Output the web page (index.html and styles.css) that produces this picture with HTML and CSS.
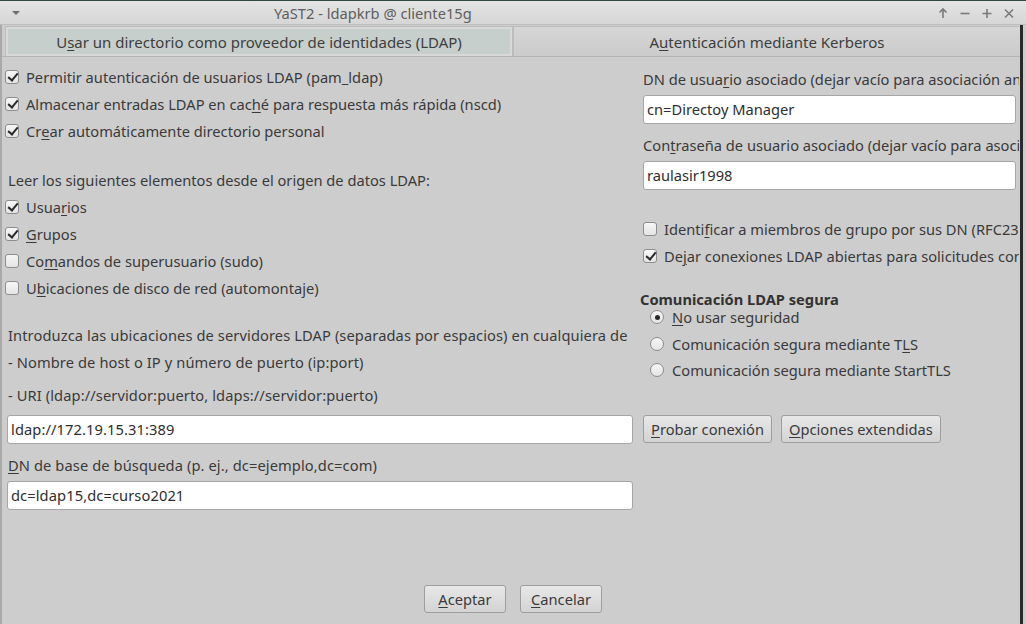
FILE: index.html
```html
<!DOCTYPE html>
<html>
<head>
<meta charset="utf-8">
<link rel="stylesheet" href="styles.css">
</head>
<body>
<div class="window">
  <div class="titlebar">
    <svg class="menu-arrow" width="10" height="6" viewBox="0 0 10 6"><path d="M1 1h8L5 5z" fill="#6e6e6e"/></svg>
    <div class="title">YaST2 - ldapkrb @ cliente15g</div>
    <div class="wbuttons">
      <svg width="12" height="12" viewBox="0 0 12 12"><path d="M6 11V2M2.5 5.5L6 2l3.5 3.5" stroke="#7a7a7a" stroke-width="1.6" fill="none"/></svg>
      <svg width="12" height="12" viewBox="0 0 12 12"><path d="M1.5 6.5h9" stroke="#7a7a7a" stroke-width="1.6"/></svg>
      <svg width="12" height="12" viewBox="0 0 12 12"><path d="M1.5 6.5h9M6 2v9" stroke="#7a7a7a" stroke-width="1.6"/></svg>
      <svg width="12" height="12" viewBox="0 0 12 12"><path d="M2 2.5l8 8M10 2.5l-8 8" stroke="#7a7a7a" stroke-width="1.6"/></svg>
    </div>
  </div>
  <div class="body">
    <div class="tabs">
      <div class="tab active">U<u>s</u>ar un directorio como proveedor de identidades (LDAP)</div>
      <div class="tab">A<u>u</u>tenticación mediante Kerberos</div>
    </div>
    <div class="content">
      <div class="col left">
        <div class="row"><span class="cb on"></span>Permitir autenticación de usuarios LDAP (pam_ldap)</div>
        <div class="row"><span class="cb on"></span>Almacenar entradas LDAP en cac<u>h</u>é para respuesta más rápida (nscd)</div>
        <div class="row"><span class="cb on"></span>Cr<u>e</u>ar automáticamente directorio personal</div>
        <div class="row label gap1">Leer los siguientes elementos desde el origen de datos LDAP:</div>
        <div class="row"><span class="cb on"></span>Usua<u>r</u>ios</div>
        <div class="row"><span class="cb on"></span><u>G</u>rupos</div>
        <div class="row"><span class="cb"></span>Co<u>m</u>andos de superusuario (sudo)</div>
        <div class="row"><span class="cb"></span>U<u>b</u>icaciones de disco de red (automontaje)</div>
        <div class="row label narrow gap2">Introduzca las ubicaciones de servidores LDAP (separadas por espacios) en cualquiera de</div>
        <div class="row label narrow">- Nombre de host o IP y número de puerto (ip:port)</div>
        <div class="row label narrow uri">- URI (ldap://servidor:puerto, ldaps://servidor:puerto)</div>
        <div class="field narrow f1">ldap://172.19.15.31:389</div>
        <div class="row label narrow dnlabel"><u>D</u>N de base de búsqueda (p. ej., dc=ejemplo,dc=com)</div>
        <div class="field narrow f2">dc=ldap15,dc=curso2021</div>
      </div>
      <div class="col right">
        <div class="row label r1">DN de usua<u>r</u>io asociado (dejar vacío para asociación anónima)</div>
        <div class="field">cn=Directoy Manager</div>
        <div class="row label r2">Con<u>t</u>raseña de usuario asociado (dejar vacío para asociación anónima)</div>
        <div class="field">raulasir1998</div>
        <div class="row r3"><span class="cb"></span>Identi<u>f</u>icar a miembros de grupo por sus DN (RFC2307bis)</div>
        <div class="row"><span class="cb on"></span>De<u>j</u>ar conexiones LDAP abiertas para solicitudes consecutivas</div>
        <div class="group-title">Comunicación LDAP segura</div>
        <div class="rrow"><span class="rb on"></span><u>N</u>o usar seguridad</div>
        <div class="rrow"><span class="rb"></span>Comunicación segura mediante T<u>L</u>S</div>
        <div class="rrow"><span class="rb"></span>Comunicación segura mediante StartTLS</div>
        <div class="btnrow">
          <div class="btn"><u>P</u>robar conexión</div>
          <div class="btn"><u>O</u>pciones extendidas</div>
        </div>
      </div>
    </div>
    <div class="footer">
      <div class="btn wide"><u>A</u>ceptar</div>
      <div class="btn wide"><u>C</u>ancelar</div>
    </div>
  </div>
</div>
</body>
</html>
```

FILE: styles.css
```css
* { box-sizing: border-box; }
html, body { margin: 0; padding: 0; }
body {
  width: 1026px;
  height: 624px;
  overflow: hidden;
  background: #cdcdcd;
  font-family: "Noto Sans", "Open Sans", sans-serif;
  font-size: 14.67px;
  color: #3a3a3a;
}
u { text-decoration: underline; text-underline-offset: 2px; text-decoration-thickness: 1px; }
.window {
  width: 1026px;
  height: 624px;
  display: flex;
  flex-direction: column;
  border-top: 1px solid #2c4a44;
}
.titlebar {
  height: 24px;
  flex: none;
  display: flex;
  align-items: center;
  background: linear-gradient(#e4e4e4, #d6d6d6);
  border-bottom: 1px solid #bdbdbd;
}
.menu-arrow { margin-left: 11px; }
.title { margin-left: 253px; font-size: 14.67px; color: #5e5e5e; }
.wbuttons { margin-left: auto; margin-right: 11px; display: flex; gap: 10px; }
.body {
  flex: 1;
  display: flex;
  flex-direction: column;
  border-left: 2px solid #a9a9a9;
  border-right: 3px solid #2a2a2a;
  margin-right: 3px;
  min-height: 0;
}
.tabs {
  height: 32px;
  flex: none;
  display: flex;
  padding-top: 1px;
  border-bottom: 1px solid #b4b4b4;
}
.tab {
  display: flex;
  align-items: center;
  justify-content: center;
  color: #3e3e3e;
  font-size: 15px;
}
.tab.active {
  width: 508px;
  margin-left: 3px;
  background: #c6cfcb;
  border: 1px solid #bcbcbc;
  border-bottom: none;
  box-shadow: inset 0 0 0 2px #d8d8d8;
}
.tab:not(.active) {
  flex: 1;
  background: linear-gradient(#d6d6d6, #cbcbcb);
  border-top: 1px solid #bcbcbc;
  border-left: 1px solid #bcbcbc;
}
.content {
  flex: 1;
  display: flex;
  padding-top: 6.5px;
  min-height: 0;
}
.col { display: flex; flex-direction: column; }
.left { width: 633px; padding-left: 3px; flex: none; }
.right { width: 379px; flex: none; margin-left: 5px; padding-left: 3px; overflow: hidden; padding-top: 1.5px; }
.row {
  height: 27px;
  flex: none;
  display: flex;
  align-items: center;
  white-space: nowrap;
}
.left .label { padding-left: 3px; }
.gap1 { margin-top: 21.5px; }
.gap2 { margin-top: 20.5px; }
.uri { margin-top: 5.5px; }
.narrow { letter-spacing: 0.1px; }
.f1 { margin-top: 6.5px; }
.dnlabel { margin-top: 7.5px; }
.f2 { margin-top: 2.5px; }
.cb {
  width: 14px;
  height: 14px;
  flex: none;
  border: 1px solid #8d8d8d;
  border-radius: 3px;
  background: linear-gradient(#f6f6f6, #e4e4e4);
  margin-right: 7px;
  position: relative;
}
.cb.on::after {
  content: "";
  position: absolute;
  left: 3.5px;
  top: 0px;
  width: 4px;
  height: 8px;
  border: solid #2a2a2a;
  border-width: 0 2.5px 2.5px 0;
  transform: rotate(40deg);
}
.field {
  height: 29px;
  flex: none;
  background: #fff;
  border: 1px solid #a6a6a6;
  border-radius: 3px;
  display: flex;
  align-items: center;
  padding-left: 3px;
  color: #2e2e2e;
  white-space: nowrap;
}
.left .field { width: 626px; margin-left: 2px; }
.right .field { width: 373px; }
.r1 { margin-bottom: 2.5px; }
.r2 { margin-top: 7.5px; margin-bottom: 2.5px; }
.r3 { margin-top: 25.5px; }
.group-title {
  margin-top: 23px;
  font-weight: bold;
  height: 14px;
  flex: none;
  display: flex;
  align-items: center;
  color: #333;
  margin-left: -3px;
  margin-bottom: -2px;
  white-space: nowrap;
}
.rrow {
  height: 26.5px;
  flex: none;
  display: flex;
  align-items: center;
  padding-left: 7px;
  white-space: nowrap;
}
.rb {
  width: 14px;
  height: 14px;
  border-radius: 50%;
  border: 1px solid #8d8d8d;
  background: linear-gradient(#f6f6f6, #e4e4e4);
  margin-right: 8px;
  position: relative;
  flex: none;
}
.rb.on::after {
  content: "";
  position: absolute;
  left: 3.5px;
  top: 3.5px;
  width: 5px;
  height: 5px;
  border-radius: 50%;
  background: #2a2a2a;
}
.btnrow { display: flex; gap: 9px; margin-top: 31px; flex: none; }
.btn {
  height: 28px;
  padding: 0 7px;
  display: flex;
  align-items: center;
  justify-content: center;
  border: 1px solid #9e9e9e;
  border-radius: 3px;
  background: linear-gradient(#e8e8e8, #d3d3d3);
  color: #3a3a3a;
  white-space: nowrap;
}
.footer {
  height: 39px;
  flex: none;
  display: flex;
  justify-content: center;
  align-items: flex-start;
  gap: 14px;
  padding-left: 4px;
}
.btn.wide { width: 82px; }
```
